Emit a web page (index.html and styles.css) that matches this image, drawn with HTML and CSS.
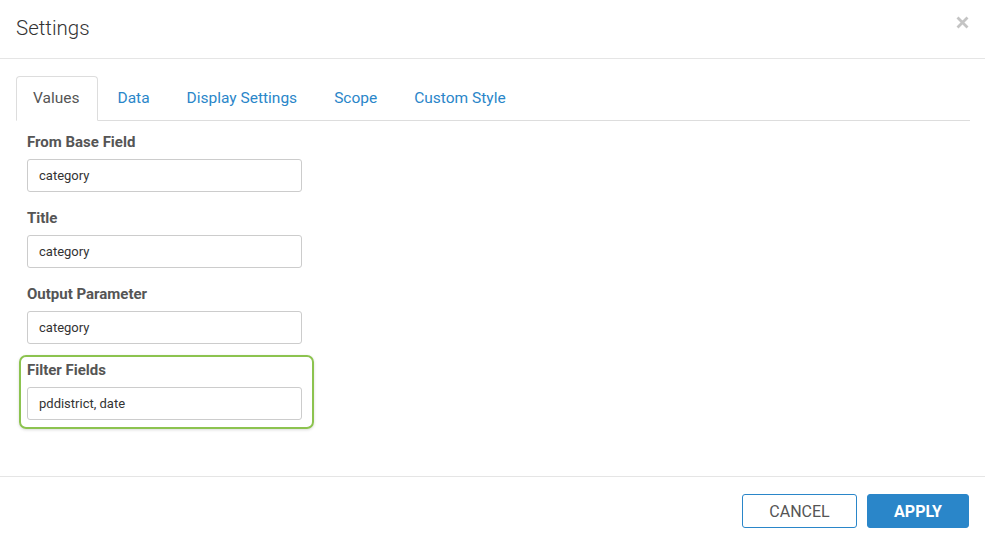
FILE: index.html
```html
<!DOCTYPE html>
<html>
<head>
<meta charset="utf-8">
<link rel="stylesheet" href="styles.css">
</head>
<body>
<div class="modal">
  <div class="modal-header">
    <h1 class="modal-title">Settings</h1>
    <span class="close" aria-label="close">
      <svg width="13" height="13" viewBox="0 0 13 13"><path d="M1.5 1.5 L11.5 11.5 M11.5 1.5 L1.5 11.5" stroke="#c4c4c4" stroke-width="2.8" stroke-linecap="butt"/></svg>
    </span>
  </div>
  <div class="modal-body">
    <ul class="tabs">
      <li class="tab active">Values</li>
      <li class="tab">Data</li>
      <li class="tab">Display Settings</li>
      <li class="tab">Scope</li>
      <li class="tab">Custom Style</li>
    </ul>
    <div class="form">
      <div class="field">
        <label class="field-label">From Base Field</label>
        <div class="input">category</div>
      </div>
      <div class="field">
        <label class="field-label">Title</label>
        <div class="input">category</div>
      </div>
      <div class="field">
        <label class="field-label">Output Parameter</label>
        <div class="input">category</div>
      </div>
      <div class="field highlight">
        <label class="field-label">Filter Fields</label>
        <div class="input">pddistrict, date</div>
      </div>
    </div>
  </div>
  <div class="modal-footer">
    <button class="btn btn-cancel">CANCEL</button>
    <button class="btn btn-apply">APPLY</button>
  </div>
</div>
</body>
</html>
```
FILE: styles.css
```css
* { box-sizing: border-box; }
html, body { margin: 0; padding: 0; background: #fff; }
body {
  font-family: Roboto, "Liberation Sans", Arial, sans-serif;
  color: #555;
}
.modal {
  width: 985px;
  height: 544px;
  display: flex;
  flex-direction: column;
}
.modal-header {
  height: 59px;
  border-bottom: 1px solid #e5e5e5;
  display: flex;
  align-items: center;
  justify-content: space-between;
  padding: 0 16px 2px 16px;
}
.modal-title {
  margin: 0;
  font-size: 20.5px;
  font-weight: 300;
  color: #333;
}
.close {
  display: flex;
  margin-top: -12px;
  margin-right: 0px;
}
.modal-body {
  flex: 1;
  padding: 17px 15px 0 16px;
}
.tabs {
  list-style: none;
  margin: 0;
  padding: 0;
  display: flex;
  height: 45px;
  border-bottom: 1px solid #ddd;
}
.tab {
  padding: 0 17px;
  margin-right: 1px;
  font-size: 15.5px;
  line-height: 43px;
  color: #2a86c9;
  border: 1px solid transparent;
  border-radius: 4px 4px 0 0;
}
.tab.active {
  color: #555;
  border-color: #ddd;
  border-bottom-color: #fff;
  background: #fff;
  height: 45px;
  padding: 0 17px 0 16px;
  margin-right: 2px;
}
.form {
  padding: 11px 0 0 11px;
}
.field {
  width: 275px;
  margin-bottom: 16px;
}
.field-label {
  display: block;
  font-size: 15px;
  font-weight: 700;
  color: #555;
  line-height: 20px;
  margin-bottom: 7px;
}
.input {
  height: 33px;
  border: 1px solid #ccc;
  border-radius: 3px;
  padding: 0 11px;
  font-size: 13px;
  line-height: 31px;
  color: #333;
}
.field:nth-child(3) { margin-top: 1px; }
.highlight {
  width: 295px;
  margin: -5px 0 0 -8px;
  padding: 3px 10px 7px 6px;
  border: 2px solid #8cc34f;
  border-radius: 7px;
  box-shadow: 0 1px 3px rgba(0,0,0,0.15);
}
.modal-footer {
  height: 68px;
  border-top: 1px solid #e5e5e5;
  display: flex;
  justify-content: flex-end;
  align-items: flex-start;
  gap: 10px;
  padding: 17px 16px 0 0;
}
.btn {
  height: 34px;
  font-family: Roboto, "Liberation Sans", Arial, sans-serif;
  font-size: 16px;
  border-radius: 3px;
  cursor: pointer;
}
.btn-cancel {
  width: 115px;
  background: #fff;
  border: 1px solid #2a86c9;
  color: #555;
}
.btn-apply {
  width: 102px;
  background: #2a86c9;
  border: 1px solid #2a86c9;
  color: #fff;
  font-weight: 700;
}
```
